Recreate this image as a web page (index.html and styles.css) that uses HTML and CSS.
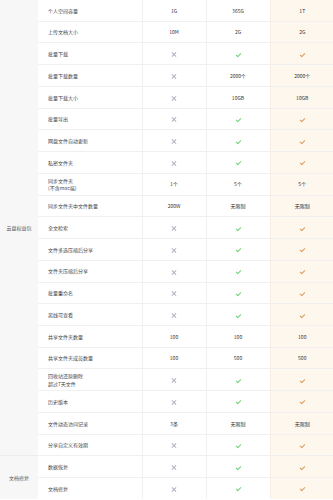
FILE: index.html
```html
<!DOCTYPE html>
<html lang="zh-CN">
<head>
    <meta charset="UTF-8">
    <meta name="viewport" content="width=device-width, initial-scale=1.0">
    <title>权益对比</title>
    <link rel="stylesheet" href="styles.css">
</head>
<body>
    <table class="compare">
        <colgroup>
            <col class="col-group">
            <col class="col-name">
            <col class="col-plan">
            <col class="col-plan">
            <col class="col-plan">
        </colgroup>
        <tbody>
            <tr>
                <td class="group" rowspan="21">云盘权益包</td>
                <td class="name">个人空间容量</td>
                <td>1G</td><td>365G</td><td class="vip">1T</td>
            </tr>
            <tr>
                <td class="name">上传文档大小</td>
                <td>10M</td><td>2G</td><td class="vip">2G</td>
            </tr>
            <tr>
                <td class="name">批量下载</td>
                <td><span class="no"></span></td><td><span class="yes"></span></td><td class="vip"><span class="yes"></span></td>
            </tr>
            <tr>
                <td class="name">批量下载数量</td>
                <td><span class="no"></span></td><td>2000个</td><td class="vip">2000个</td>
            </tr>
            <tr>
                <td class="name">批量下载大小</td>
                <td><span class="no"></span></td><td>10GB</td><td class="vip">10GB</td>
            </tr>
            <tr>
                <td class="name">批量导出</td>
                <td><span class="no"></span></td><td><span class="yes"></span></td><td class="vip"><span class="yes"></span></td>
            </tr>
            <tr>
                <td class="name">网盘文件自动更新</td>
                <td><span class="no"></span></td><td><span class="yes"></span></td><td class="vip"><span class="yes"></span></td>
            </tr>
            <tr>
                <td class="name">私密文件夹</td>
                <td><span class="no"></span></td><td><span class="yes"></span></td><td class="vip"><span class="yes"></span></td>
            </tr>
            <tr>
                <td class="name">同步文件夹<br>(不含mac端)</td>
                <td>1个</td><td>5个</td><td class="vip">5个</td>
            </tr>
            <tr>
                <td class="name">同步文件夹中文件数量</td>
                <td>200W</td><td>无限制</td><td class="vip">无限制</td>
            </tr>
            <tr>
                <td class="name">全文检索</td>
                <td><span class="no"></span></td><td><span class="yes"></span></td><td class="vip"><span class="yes"></span></td>
            </tr>
            <tr>
                <td class="name">文件多选压缩后分享</td>
                <td><span class="no"></span></td><td><span class="yes"></span></td><td class="vip"><span class="yes"></span></td>
            </tr>
            <tr>
                <td class="name">文件夹压缩后分享</td>
                <td><span class="no"></span></td><td><span class="yes"></span></td><td class="vip"><span class="yes"></span></td>
            </tr>
            <tr>
                <td class="name">批量重命名</td>
                <td><span class="no"></span></td><td><span class="yes"></span></td><td class="vip"><span class="yes"></span></td>
            </tr>
            <tr>
                <td class="name">离线可查看</td>
                <td><span class="no"></span></td><td><span class="yes"></span></td><td class="vip"><span class="yes"></span></td>
            </tr>
            <tr>
                <td class="name">共享文件夹数量</td>
                <td>100</td><td>100</td><td class="vip">100</td>
            </tr>
            <tr>
                <td class="name">共享文件夹成员数量</td>
                <td>100</td><td>500</td><td class="vip">500</td>
            </tr>
            <tr>
                <td class="name">回收站还原删除<br>超过7天文件</td>
                <td><span class="no"></span></td><td><span class="yes"></span></td><td class="vip"><span class="yes"></span></td>
            </tr>
            <tr>
                <td class="name">历史版本</td>
                <td><span class="no"></span></td><td><span class="yes"></span></td><td class="vip"><span class="yes"></span></td>
            </tr>
            <tr>
                <td class="name">文件动态访问记录</td>
                <td>3条</td><td>无限制</td><td class="vip">无限制</td>
            </tr>
            <tr>
                <td class="name">分享自定义有效期</td>
                <td><span class="no"></span></td><td><span class="yes"></span></td><td class="vip"><span class="yes"></span></td>
            </tr>
            <tr class="group-start">
                <td class="group" rowspan="2">文档修复</td>
                <td class="name">数据恢复</td>
                <td><span class="no"></span></td><td><span class="yes"></span></td><td class="vip"><span class="yes"></span></td>
            </tr>
            <tr>
                <td class="name">文档修复</td>
                <td><span class="no"></span></td><td><span class="yes"></span></td><td class="vip"><span class="yes"></span></td>
            </tr>
        </tbody>
    </table>
</body>
</html>
```

FILE: styles.css
```css
body {
    margin: 0;
    font-family: "Noto Sans CJK SC", "Liberation Sans", sans-serif;
    background: #fff;
}

.compare {
    width: 333px;
    border-collapse: collapse;
    table-layout: fixed;
    font-size: 5px;
    color: #333;
}

.col-group {
    width: 38px;
}
.col-name {
    width: 104px;
}
.col-plan {
    width: 64px;
}

.compare td {
    height: 20.74px;
    padding: 0;
    text-align: center;
    line-height: 1.5;
    border-top: 1px solid #f0f0f0;
    border-left: 1px solid #f0f0f0;
}
.compare tr:first-child td {
    border-top: none;
}

.compare td.group {
    background: #f7f7f7;
    color: #555;
    border-left: none;
}
.group-start td.group {
    border-top: 1px solid #ececec;
}

.compare td.name {
    text-align: left;
    padding-left: 10px;
    color: #444;
    border-left: none;
}

.compare td.vip {
    background: #fef7ee;
    border-left-color: #f6eee4;
}

/* tick and cross icons */
.yes,
.no {
    display: inline-block;
    position: relative;
    width: 6px;
    height: 5px;
    vertical-align: middle;
}
.yes::before {
    content: "";
    position: absolute;
    left: 1px;
    top: 0.5px;
    width: 4px;
    height: 2px;
    border-left: 1px solid #6fd27c;
    border-bottom: 1px solid #6fd27c;
    transform: rotate(-45deg);
}
.vip .yes::before {
    border-color: #d99c5c;
}
.no::before,
.no::after {
    content: "";
    position: absolute;
    left: 0;
    top: 2px;
    width: 6px;
    height: 1px;
    background: #b0b4c2;
    transform: rotate(45deg);
}
.no::after {
    transform: rotate(-45deg);
}
```
